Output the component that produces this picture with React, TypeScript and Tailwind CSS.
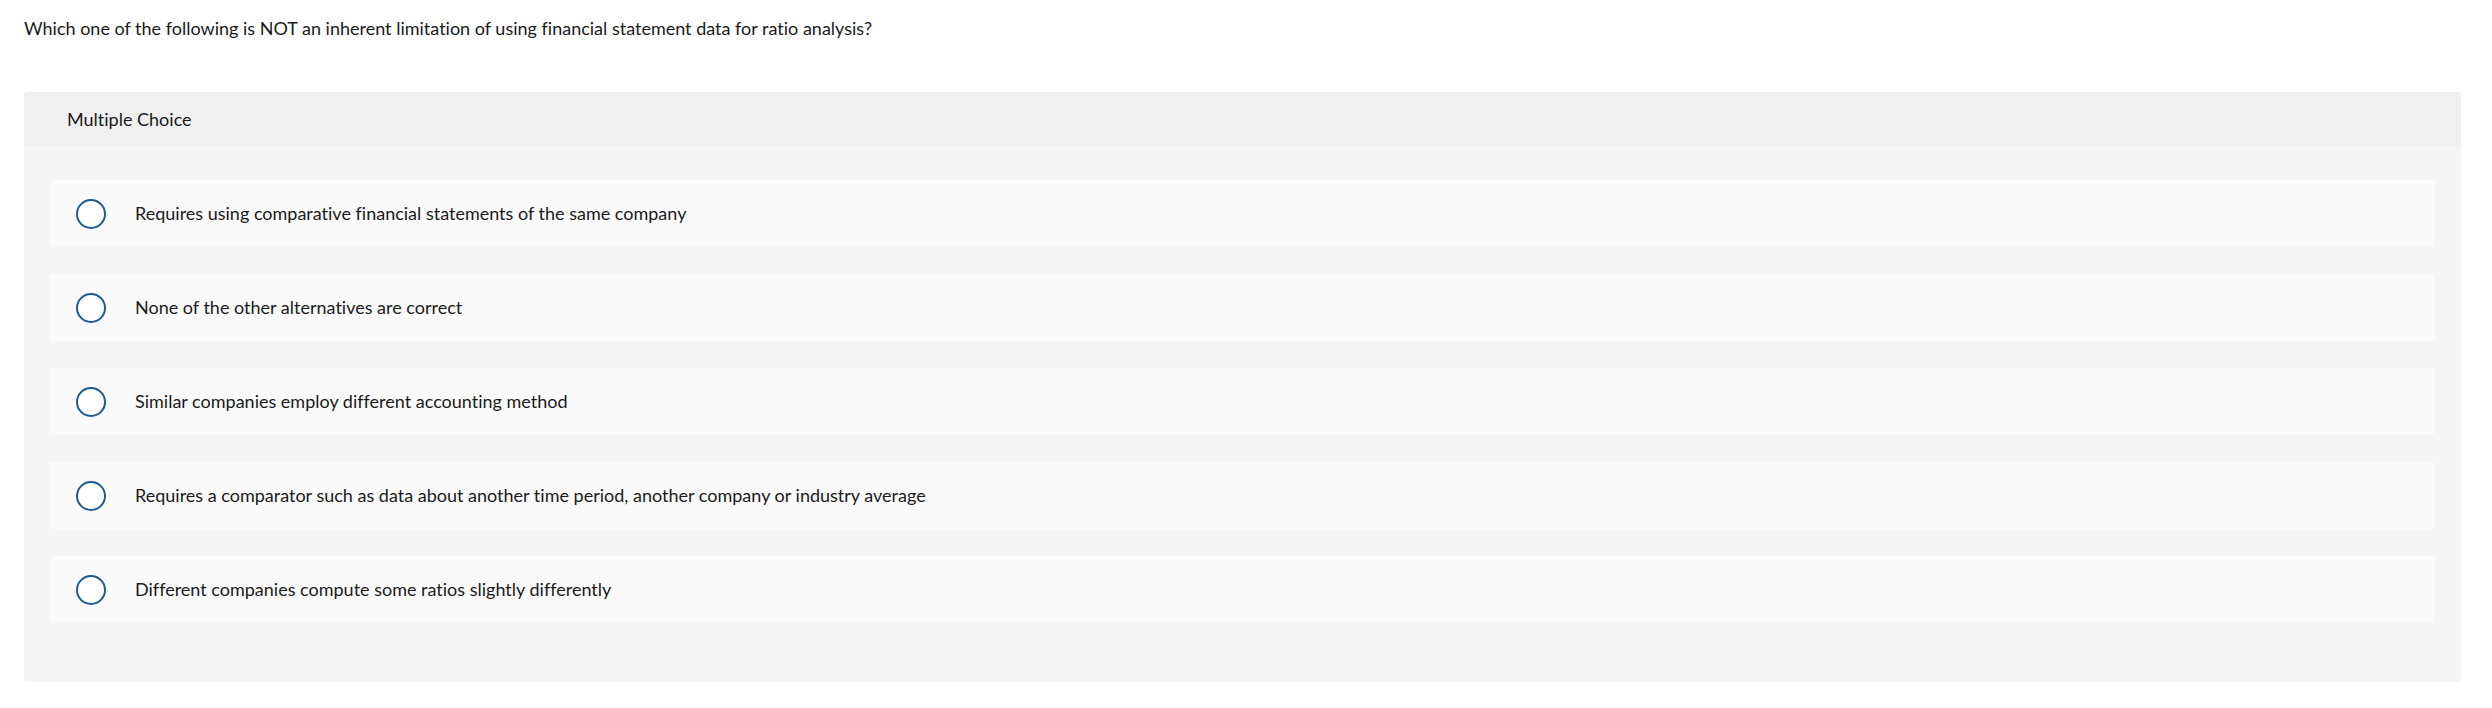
const options = [
  "Requires using comparative financial statements of the same company",
  "None of the other alternatives are correct",
  "Similar companies employ different accounting method",
  "Requires a comparator such as data about another time period, another company or industry average",
  "Different companies compute some ratios slightly differently",
];

export default function App() {
  return (
    <div className="min-h-[708px] w-full bg-white text-[#1a1a1a] font-['Lato',sans-serif] text-[18px] [font-variant-ligatures:none]">
      <p className="pl-[24px] pt-[15px] leading-[26px]">
        Which one of the following is NOT an inherent limitation of using financial statement data for ratio analysis?
      </p>

      <div className="ml-[24px] mt-[51px] w-[2437px] rounded-[4px] bg-[#f5f5f5]">
        <div className="flex h-[54px] items-center rounded-t-[4px] bg-[#f0f0f0] pl-[43px]">
          Multiple Choice
        </div>
        <div className="flex flex-col gap-[27px] px-[26px] pt-[34px] pb-[59px]">
          {options.map((o) => (
            <label key={o} className="flex h-[67px] cursor-pointer items-center gap-[29px] rounded-[3px] bg-[#fafafa] pl-[26px]">
              <span className="size-[30px] shrink-0 rounded-full border-2 border-[#1d5a94] bg-white" />
              <span>{o}</span>
            </label>
          ))}
        </div>
      </div>
    </div>
  );
}
